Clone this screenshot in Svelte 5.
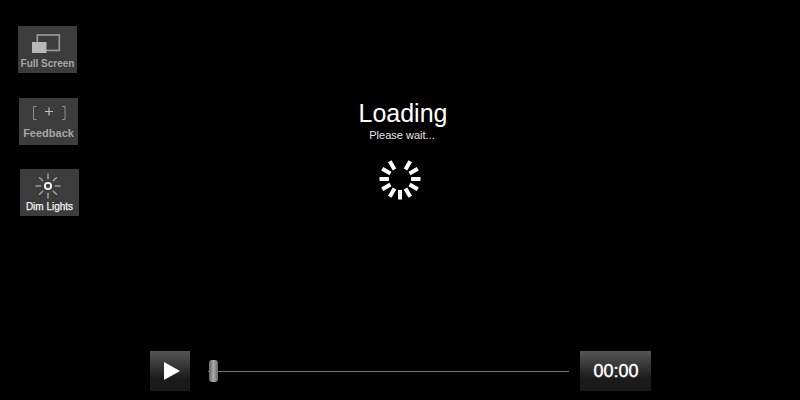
<script lang="ts">
	const tools = [
		{ label: 'Full Screen', icon: 'screen', tone: 'muted' },
		{ label: 'Feedback', icon: 'plus', tone: 'muted' },
		{ label: 'Dim Lights', icon: 'sun', tone: 'bright' }
	];

	// the spinner has no spoke at twelve o'clock
	const spokes = [30, 60, 90, 120, 150, 180, 210, 240, 270, 300, 330];
	const rays = [0, 45, 90, 135, 180, 225, 270, 315];
</script>

<div class="player">
	<div class="stage">
		<aside class="tools">
			{#each tools as tool}
				<button class="tool {tool.tone}">
					{#if tool.icon === 'screen'}
						<svg width="32" height="22" viewBox="0 0 32 22">
							<rect x="5.3" y="1" width="22" height="15.4" fill="none" stroke="#969696" stroke-width="1.7" />
							<rect x="0" y="8" width="14.5" height="11" fill="#b8b8b8" />
						</svg>
					{:else if tool.icon === 'plus'}
						<svg width="36" height="20" viewBox="0 0 36 20">
							<path d="M5.5 0.5H2.5V13.5H5.5M31 0.5H34V13.5H31" fill="none" stroke="#8f8f8f" stroke-width="1" />
							<path d="M18 1.5V9.5M14 5.5H22" fill="none" stroke="#c0c0c0" stroke-width="1.2" />
						</svg>
					{:else}
						<svg class="sun" width="26" height="26" viewBox="-13 -13 26 26">
							<circle r="3.1" fill="none" stroke="#f4f4f4" stroke-width="1.9" />
							{#each rays as ray}
								<line y1="-6.8" y2="-12.5" stroke="#a0a0a0" stroke-width="1.5" transform="rotate({ray})" />
							{/each}
						</svg>
					{/if}
					<span>{tool.label}</span>
				</button>
			{/each}
		</aside>

		<div class="status">
			<h1>Loading</h1>
			<p>Please wait...</p>
			<svg class="spinner" width="44" height="44" viewBox="-22 -22 44 44">
				{#each spokes as angle}
					<rect x="-2" y="-20.5" width="4" height="9.5" fill="#fff" transform="rotate({angle})" />
				{/each}
			</svg>
		</div>
	</div>

	<div class="controls">
		<button class="play" aria-label="Play">
			<svg width="16" height="18" viewBox="0 0 16 18"><path d="M0 0L16 9L0 18Z" fill="#fff" /></svg>
		</button>
		<div class="track">
			<div class="thumb"></div>
		</div>
		<div class="time">00:00</div>
	</div>
</div>

<style>
	:global(body) {
		margin: 0;
		background: #000;
	}

	.player {
		width: 800px;
		height: 400px;
		display: flex;
		flex-direction: column;
		background: #000;
		font-family: 'Liberation Sans', Arial, sans-serif;
		overflow: hidden;
	}

	.stage {
		flex: 1;
		display: grid;
		grid-template-columns: 100px 600px 100px;
	}

	.tools {
		display: flex;
		flex-direction: column;
		gap: 25px;
		padding: 26px 0 0 18px;
	}

	.tool {
		width: 59px;
		height: 47px;
		padding: 0;
		border: 0;
		background: #3c3c3c;
		display: flex;
		flex-direction: column;
		align-items: center;
		justify-content: flex-end;
		font: inherit;
	}

	.tool:nth-child(2) {
		margin-left: 1px;
	}

	.tool:nth-child(3) {
		margin-left: 2px;
		margin-top: -1px;
	}

	.tool span {
		font-size: 10px;
		font-weight: 700;
		line-height: 13px;
		margin-bottom: 3px;
		color: #a6a6a6;
		white-space: nowrap;
	}

	.tool:nth-child(2) span {
		font-size: 11px;
		margin-bottom: 5px;
	}

	.tool.bright span {
		font-weight: 400;
		color: #f2f2f2;
		-webkit-text-stroke: 0.25px #f2f2f2;
	}

	.tool svg {
		display: block;
		margin-bottom: 1px;
	}

	.tool svg.sun {
		margin-right: 4px;
	}

	.status {
		display: flex;
		flex-direction: column;
		align-items: center;
		padding-top: 98px;
		color: #fff;
	}

	.status h1 {
		margin: 0 0 0 6px;
		font-size: 25px;
		font-weight: 400;
		line-height: 30px;
	}

	.status p {
		margin: 1px 0 -1px 4px;
		font-size: 11px;
		line-height: 13px;
		color: #e6e6e6;
	}

	.spinner {
		display: block;
		margin-top: 16px;
	}

	.controls {
		height: 40px;
		margin-bottom: 9px;
		padding-left: 150px;
		display: flex;
		align-items: center;
	}

	.play {
		width: 40px;
		height: 40px;
		padding: 0 0 0 4px;
		border: 0;
		background: linear-gradient(#555, #1a1a1a 70%);
		display: flex;
		align-items: center;
		justify-content: center;
	}

	.track {
		width: 361px;
		height: 22px;
		margin-left: 18px;
		display: flex;
		align-items: center;
		background: linear-gradient(#777, #777) center / 100% 1px no-repeat;
	}

	.thumb {
		width: 9px;
		height: 22px;
		margin-left: 1px;
		border-radius: 3px;
		background: linear-gradient(90deg, #666, #aaa 50%, #666);
	}

	.time {
		width: 70px;
		height: 40px;
		margin-left: 11px;
		padding-left: 1px;
		background: linear-gradient(#555, #1a1a1a 70%);
		color: #fff;
		font-size: 18px;
		font-weight: 400;
		line-height: 40px;
		text-align: center;
		-webkit-text-stroke: 0.4px #fff;
	}
</style>
